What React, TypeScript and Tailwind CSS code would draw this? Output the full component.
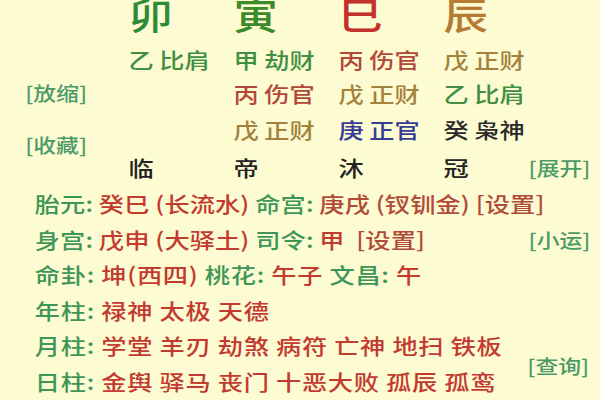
import React from 'react';

type Cell = { text: string; color: string } | null;

const GREEN = 'text-[#3f8f45]';
const RED = 'text-[#b3473a]';
const OLIVE = 'text-[#a3823d]';
const BLUE = 'text-[#363c93]';
const DARK = 'text-[#2b2b2b]';

const shishen: Cell[][] = [
  [
    { text: '乙 比肩', color: GREEN },
    { text: '甲 劫财', color: GREEN },
    { text: '丙 伤官', color: RED },
    { text: '戊 正财', color: OLIVE },
  ],
  [null, { text: '丙 伤官', color: RED }, { text: '戊 正财', color: OLIVE }, { text: '乙 比肩', color: GREEN }],
  [null, { text: '戊 正财', color: OLIVE }, { text: '庚 正官', color: BLUE }, { text: '癸 枭神', color: DARK }],
];

const L = 'text-[#3d9658]';
const V = 'text-[#c23a30]';
const S = 'text-[#b24a3a]';

type Seg = [string, string];

function Line({ segs, right, tight }: { segs: Seg[]; right?: string; tight?: boolean }) {
  return (
    <div className="flex h-[35.5px] items-center pl-[29px] pr-[8px] text-[21px] leading-none">
      <div className={`flex-1 whitespace-pre ${tight ? 'tracking-[0.1px]' : 'tracking-[0.6px]'}`}>
        {segs.map(([t, c], i) => (
          <span key={i} className={c}>
            {t}
          </span>
        ))}
      </div>
      {right && <span className="text-[19px] text-[#4c9a6a]">{right}</span>}
    </div>
  );
}

export default function App() {
  return (
    <div className="h-[400px] w-[600px] overflow-hidden bg-[#fdfbd1] font-['Noto_Sans_CJK_SC','Noto_Sans',sans-serif] font-medium">
      <div className="w-[500px] origin-top-left scale-x-[1.2]">
        <div className="flex">
          {/* left side buttons */}
          <div className="flex w-[107px] flex-col pl-[21px] pt-[76px] text-[19px] text-[#4c9a6a]">
            <div className="flex h-[34px] items-center">[放缩]</div>
            <div className="mt-[18px] flex h-[34px] items-center">[收藏]</div>
          </div>

          <div className="flex flex-1 flex-col">
            <div className="-mt-[4px] flex h-[36px] items-center text-[37px] leading-none">
              <div className="w-[87.5px] text-[#2f8a37]">卯</div>
              <div className="w-[87.5px] text-[#3d8a2c]">寅</div>
              <div className="w-[87.5px] text-[#c3302a]">巳</div>
              <div className="w-[87.5px] text-[#b57c36]">辰</div>
            </div>

            {shishen.map((row, i) => (
              <div
                key={i}
                className={`flex items-center text-[21px] leading-none ${
                  i === 0 ? 'mt-[10px] h-[34px]' : i === 1 ? 'h-[34px]' : 'h-[38px]'
                }`}
              >
                {row.map((c, j) => (
                  <div key={j} className={`w-[87.5px] ${c ? c.color : ''}`}>
                    {c ? c.text : ''}
                  </div>
                ))}
              </div>
            ))}

            <div className="flex h-[38px] items-center pr-[8px] text-[21px] leading-none text-[#222]">
              <div className="w-[87.5px]">临</div>
              <div className="w-[87.5px]">帝</div>
              <div className="w-[87.5px]">沐</div>
              <div className="flex-1">冠</div>
              <span className="text-[19px] text-[#4c9a6a]">[展开]</span>
            </div>
          </div>
        </div>

        <Line
          tight
          segs={[
            ['胎元: ', L],
            ['癸巳 (长流水) ', V],
            ['命宫: ', L],
            ['庚戌 (钗钏金) ', S],
            ['[设置]', S],
          ]}
        />
        <Line
          tight
          segs={[
            ['身宫: ', L],
            ['戊申 (大驿土) ', V],
            ['司令: ', L],
            ['甲 ', V],
            [' [设置]', S],
          ]}
          right="[小运]"
        />
        <Line
          segs={[
            ['命卦: ', L],
            ['坤(西四) ', V],
            ['桃花: ', L],
            ['午子 ', V],
            ['文昌: ', L],
            ['午', V],
          ]}
        />
        <Line segs={[['年柱: ', L], ['禄神 太极 天德', V]]} />
        <div className="flex items-center">
          <div className="flex-1">
            <Line segs={[['月柱: ', L], ['学堂 羊刃 劫煞 病符 亡神 地扫 铁板', V]]} />
            <Line segs={[['日柱: ', L], ['金舆 驿马 丧门 十恶大败 孤辰 孤鸾', V]]} />
          </div>
          <span className="mt-[6px] pr-[9px] text-[19px] text-[#4c9a6a]">[查询]</span>
        </div>
      </div>
    </div>
  );
}
